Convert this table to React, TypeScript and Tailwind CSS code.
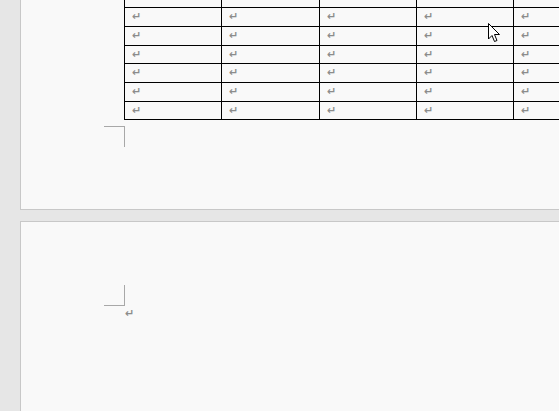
import React from "react";

const rowHeights = [19, 19, 19, 18, 19, 19, 18];
const colWidths = [97, 98, 97, 97, 97];

function Mark() {
  return (
    <span
      className="block text-[11px] leading-[11px] font-bold text-[#8c8c8c]"
      style={{ fontFamily: '"DejaVu Sans", sans-serif' }}
    >
      ↵
    </span>
  );
}

function Cursor() {
  return (
    <svg className="absolute left-[488px] top-[23px]" width="14" height="21" viewBox="0 0 14 21">
      <path
        d="M0.5 0.5 L0.5 16 L4 12.5 L6.5 18.5 L9 17.5 L6.5 11.5 L11.5 11.5 Z"
        fill="#ffffff"
        stroke="#000000"
        strokeWidth="1"
        strokeLinejoin="miter"
      />
    </svg>
  );
}

export default function App() {
  return (
    <div className="relative w-[559px] h-[411px] overflow-hidden bg-[#e6e6e6] flex flex-col">
      {/* Page 1 */}
      <div className="ml-[20px] h-[210px] shrink-0 bg-[#f9f9f9] border-l border-b border-[#c8c8c8] overflow-hidden flex flex-col">
        <div className="mt-[-12px] ml-[103px] flex flex-col border-b border-black w-max">
          {rowHeights.map((h, i) => (
            <div key={i} className="flex border-t border-black overflow-hidden" style={{ height: h }}>
              {colWidths.map((w, j) => (
                <div key={j} className="border-l border-black pl-[7px] pt-[3px] leading-none shrink-0" style={{ width: w }}>
                  <Mark />
                </div>
              ))}
              <div className="border-l border-black w-[20px] shrink-0" />
            </div>
          ))}
        </div>
        <div className="ml-[83px] mt-[6px] w-[21px] h-[21px] border-t border-r border-[#a8a8a8]" />
      </div>
      {/* gap */}
      <div className="h-[11px] shrink-0" />
      {/* Page 2 */}
      <div className="ml-[20px] flex-1 bg-[#f9f9f9] border-l border-t border-[#c8c8c8] flex flex-col">
        <div className="ml-[83px] mt-[63px] w-[21px] h-[21px] border-b border-r border-[#a8a8a8]" />
        <div className="ml-[104px] mt-[2px] leading-none">
          <Mark />
        </div>
      </div>
      <Cursor />
    </div>
  );
}
